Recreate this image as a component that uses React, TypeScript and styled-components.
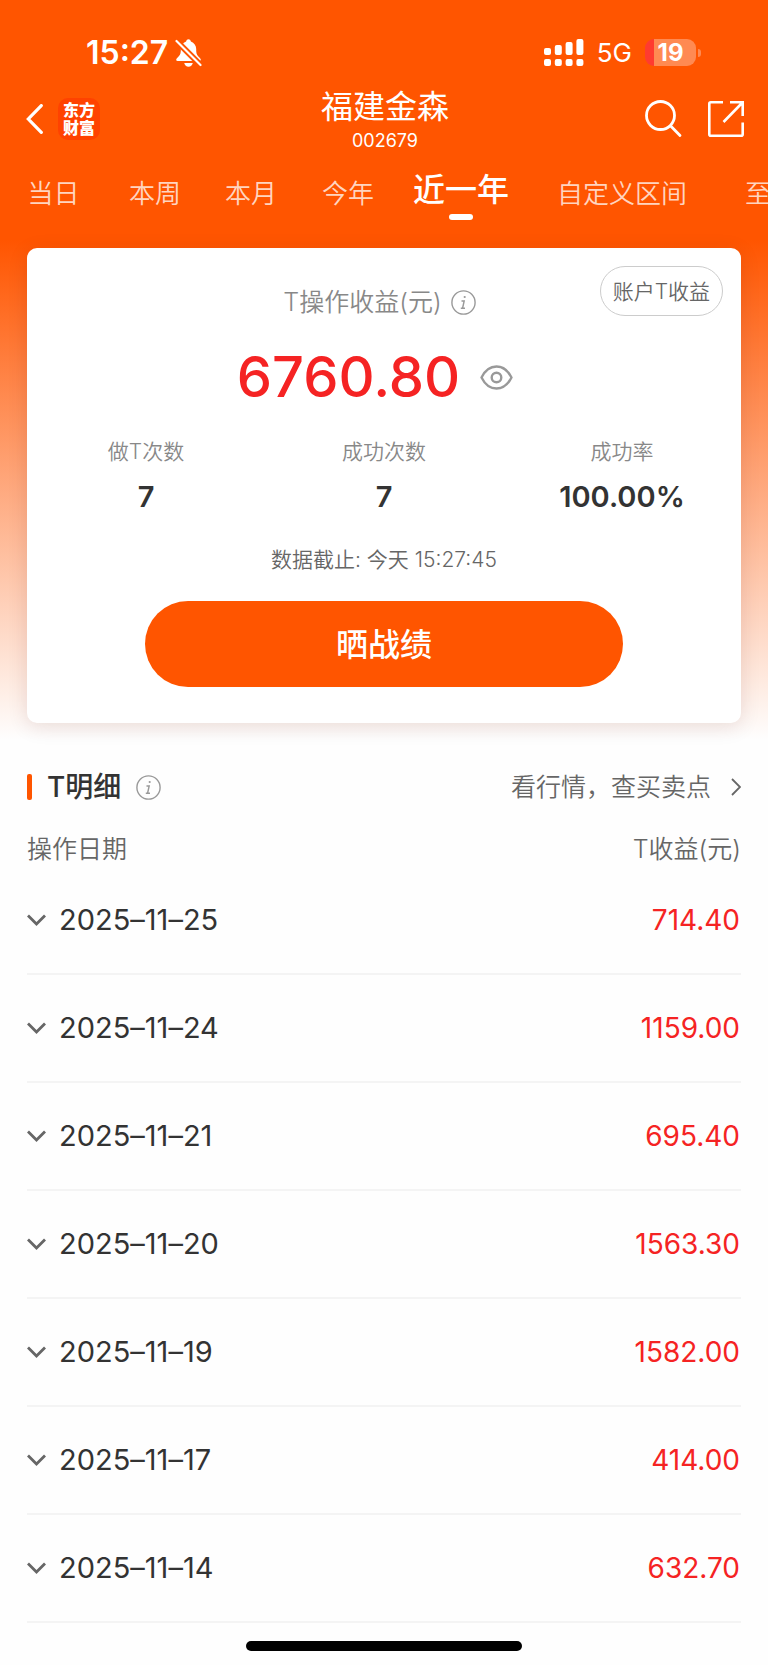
import React, { useState } from "react";
import styled, { createGlobalStyle } from "styled-components";

const GlobalStyle = createGlobalStyle`
  *, *::before, *::after { box-sizing: border-box; }
  body {
    margin: 0;
    background: #fefefe;
    color: #333;
    font-family: Inter, "Noto Sans CJK SC", sans-serif;
  }
  button { font: inherit; border: 0; padding: 0; background: none; color: inherit; cursor: pointer; }
  a { color: inherit; text-decoration: none; }
  h1, h2, p, dl, dd { margin: 0; font-weight: 400; }
  svg { display: block; flex: none; }
`;

const Page = styled.div`
  display: flex;
  flex-direction: column;
  min-height: 100vh;
  background: linear-gradient(#ff5500 240px, #fefefe 740px);
`;

const StatusBar = styled.div`
  display: flex;
  justify-content: space-between;
  align-items: center;
  height: 80px;
  padding: 25px 67px 0 86px;
  color: #fff;
`;

const StatusGroup = styled.div<{ $gap: number }>`
  display: flex;
  align-items: center;
  gap: ${(p) => p.$gap}px;
`;

const Clock = styled.span`
  font-size: 32px;
  font-weight: 600;
  line-height: 32px;
`;

const Network = styled.span`
  font-size: 26px;
  font-weight: 400;
  line-height: 32px;
`;

const Battery = styled.div`
  display: flex;
  align-items: center;
  gap: 2px;
`;

const BatteryBody = styled.div`
  width: 51px;
  height: 27px;
  border-radius: 9px;
  background: linear-gradient(90deg, #ff3b30 9px, #ff8a52 9px);
  font-size: 24px;
  font-weight: 700;
  line-height: 27px;
  text-align: center;
`;

const BatteryCap = styled.div`
  width: 3px;
  height: 8px;
  border-radius: 0 3px 3px 0;
  background: #ff8a52;
`;

const NavBar = styled.header`
  display: grid;
  grid-template-columns: 1fr auto 1fr;
  align-items: center;
  height: 78px;
  padding: 0 24px 0 26px;
  color: #fff;
`;

const NavSide = styled.div<{ $end?: boolean }>`
  display: flex;
  align-items: center;
  justify-content: ${(p) => (p.$end ? "flex-end" : "flex-start")};
  gap: ${(p) => (p.$end ? 26 : 15)}px;
`;

const Logo = styled.a`
  display: grid;
  place-content: center;
  width: 42px;
  height: 42px;
  border-radius: 10px;
  background: #ff4200;
  font-size: 16px;
  font-weight: 900;
  line-height: 18px;
  text-align: center;
`;

const TitleBlock = styled.div`
  padding-top: 3px;
  text-align: center;
`;

const Title = styled.h1`
  font-size: 32px;
  line-height: 40px;
`;

const StockCode = styled.p`
  font-size: 18px;
  line-height: 28px;
`;

const Tabs = styled.nav`
  display: grid;
  grid-template-columns: 107px 96px 96px 98px 128px 194px 104px;
  height: 90px;
  overflow: hidden;
`;

const Tab = styled.button<{ $active: boolean }>`
  display: flex;
  flex-direction: column;
  align-items: center;
  gap: 5px;
  padding-top: ${(p) => (p.$active ? 13 : 17)}px;
  color: ${(p) => (p.$active ? "#fff" : "#ffd5c0")};
  font-size: ${(p) => (p.$active ? 32 : 26)}px;
  font-weight: ${(p) => (p.$active ? 500 : 350)};
  line-height: 38px;
  white-space: nowrap;

  &::after {
    content: "";
    display: ${(p) => (p.$active ? "block" : "none")};
    width: 24px;
    height: 6px;
    border-radius: 3px;
    background: #fff;
  }
`;

const Card = styled.section`
  margin: 0 27px;
  padding: 18px 0 36px;
  border-radius: 10px;
  background: #fff;
  box-shadow: 0 4px 20px rgba(80, 20, 0, 0.12);
`;

const CardHead = styled.div`
  display: grid;
  grid-template-columns: 1fr auto 1fr;
  align-items: start;
  padding: 0 18px;
`;

const CardTitle = styled.h2`
  grid-column: 2;
  display: flex;
  align-items: center;
  gap: 9px;
  padding: 18px 9px 0 0;
  color: #888;
  font-size: 25px;
  font-weight: 350;
  line-height: 36px;
`;

const IconButton = styled.button`
  display: inline-flex;
  color: #999;
`;

const AccountButton = styled.button`
  justify-self: end;
  height: 50px;
  padding: 0 12px 2px;
  border: 1px solid #ccc;
  border-radius: 25px;
  color: #666;
  font-size: 21px;
  font-weight: 350;
  white-space: nowrap;
`;

const Profit = styled.div`
  display: flex;
  align-items: center;
  justify-content: center;
  gap: 20px;
  padding-right: 18px;
  margin-top: 22px;
`;

const ProfitValue = styled.strong`
  color: #f52323;
  font-size: 56px;
  font-weight: 500;
  line-height: 70px;
`;

const Stats = styled.dl`
  display: grid;
  grid-template-columns: repeat(3, 1fr);
  margin-top: 24px;
  text-align: center;
`;

const StatLabel = styled.dt`
  color: #888;
  font-size: 21px;
  font-weight: 350;
  line-height: 32px;
`;

const StatValue = styled.dd`
  margin-top: 9px;
  font-size: 29px;
  font-weight: 600;
  line-height: 40px;
`;

const Cutoff = styled.p`
  margin-top: 28px;
  color: #666;
  font-size: 21px;
  font-weight: 350;
  line-height: 30px;
  text-align: center;
`;

const ShareButton = styled.button`
  display: block;
  width: 67%;
  height: 86px;
  padding-bottom: 4px;
  margin: 26px auto 0;
  border-radius: 43px;
  background: #ff5500;
  color: #fff;
  font-size: 32px;
  font-weight: 500;
`;

const Details = styled.section`
  padding: 44px 27px 0;
`;

const DetailsHead = styled.div`
  display: flex;
  align-items: center;
  justify-content: space-between;
  height: 40px;
`;

const DetailsTitle = styled.div`
  display: flex;
  align-items: center;
  gap: 15px;

  &::before {
    content: "";
    width: 5px;
    height: 26px;
    border-radius: 2px;
    background: #ff5500;
  }

  h2 {
    font-size: 28px;
    font-weight: 500;
    line-height: 40px;
  }
`;

const QuoteLink = styled.a`
  display: flex;
  align-items: center;
  gap: 20px;
  color: #666;
  font-size: 25px;
  font-weight: 350;
  line-height: 40px;
`;

const Records = styled.table`
  width: 100%;
  margin-top: 25px;
  border-collapse: collapse;

  th {
    height: 34px;
    padding: 0;
    color: #666;
    font-size: 25px;
    font-weight: 350;
    line-height: 34px;
    text-align: left;
  }

  th:last-child,
  td:last-child {
    text-align: right;
  }

  td {
    height: 108px;
    padding: 0;
    border-bottom: 2px solid #f4f4f4;
    font-size: 29px;
    line-height: 40px;
  }
`;

const DateToggle = styled.button`
  display: flex;
  align-items: center;
  gap: 13px;
  font-feature-settings: "calt" 0;
`;

const Amount = styled.td`
  && {
    padding-right: 1px;
    color: #f52323;
    font-size: 28px;
  }
`;

const HomeIndicator = styled.div`
  width: 36%;
  height: 10px;
  margin: auto auto 14px;
  border-radius: 5px;
  background: #000;
`;

const BellOff = () => (
  <svg width="27" height="28" viewBox="0 0 27 28" fill="#fff" aria-label="静音">
    <path d="M13.500 0.300C12.300 0.300 11.500 1 11.100 2.500C7.800 3.700 5.900 6.500 5.800 10V12C5.700 15.500 4.500 16.700 1.900 19.200C0.700 20.300 1 22 2.600 22H24.400C26 22 26.300 20.300 25.100 19.200C22.500 16.700 21.300 15.500 21.200 12V10C21.100 6.500 19.200 3.700 15.900 2.500C15.500 1 14.700 0.300 13.500 0.300Z" />
    <path d="M9.200 24H17.800C17.200 26.300 15.700 27.700 13.500 27.700S9.800 26.300 9.200 24Z" />
    <path d="M0 0.500L26.500 27" stroke="#ff5500" strokeWidth="6" />
    <path d="M1.500 2L25.500 26" stroke="#fff" strokeWidth="2.200" strokeLinecap="round" />
  </svg>
);

const Signal = () => (
  <svg width="40" height="28" viewBox="0 0 40 28" fill="#fff" aria-label="信号">
    {[9, 6, 3, 0].map((top, i) => (
      <g key={top}>
        <rect x={i * 10.800} y={top} width="7" height={16 - top} rx="2" />
        <rect x={i * 10.800} y="20" width="7" height="7" rx="2" />
      </g>
    ))}
  </svg>
);

const InfoIcon = () => (
  <svg width="25" height="25" viewBox="0 0 25 25" fill="none" stroke="currentColor" strokeWidth="1.400">
    <circle cx="12.500" cy="12.500" r="11.600" />
    <circle cx="13.700" cy="7" r="1.100" fill="currentColor" stroke="none" />
    <path d="M10.500 11H13.200L11.600 18M9.800 18.300H14" />
  </svg>
);

const EyeIcon = () => (
  <svg width="33" height="25" viewBox="0 0 33 25" fill="none" stroke="currentColor" strokeWidth="2.400">
    <path d="M1.500 12.500C5 5.500 10 1.500 16.500 1.500S28 5.500 31.500 12.500C28 19.500 23 23.500 16.500 23.500S5 19.500 1.500 12.500Z" strokeLinejoin="round" />
    <circle cx="16.500" cy="12.500" r="4.800" />
  </svg>
);

const BackIcon = () => (
  <svg width="17" height="30" viewBox="0 0 17 30" fill="none" stroke="#fff" strokeWidth="3.200" strokeLinecap="round">
    <path d="M15.300 1.600L2.300 15L15.300 28.400" />
  </svg>
);

const SearchIcon = () => (
  <svg width="37" height="38" viewBox="0 0 37 38" fill="none" stroke="#fff" strokeWidth="2.800" strokeLinecap="round">
    <circle cx="15.500" cy="15.500" r="14" />
    <path d="M25.700 26L35 35.500" />
  </svg>
);

const ShareIcon = () => (
  <svg width="36" height="36" viewBox="0 0 36 36" fill="none" stroke="#fff" strokeWidth="2.600">
    <path d="M15 1.300H2.800Q1.300 1.300 1.300 2.800V33.200Q1.300 34.700 2.800 34.700H33.200Q34.700 34.700 34.700 33.200V21.500M22 1.300H34.700V15M34.500 1.500L15.500 21" />
  </svg>
);

const ArrowRight = () => (
  <svg width="10" height="18" viewBox="0 0 10 18" fill="none" stroke="#666" strokeWidth="1.800">
    <path d="M1 1L9 9L1 17" />
  </svg>
);

const ArrowDown = () => (
  <svg width="19" height="12" viewBox="0 0 19 12" fill="none" stroke="#666" strokeWidth="2.800">
    <path d="M1 1.500L9.500 10L18 1.500" />
  </svg>
);

const ranges = ["当日", "本周", "本月", "今年", "近一年", "自定义区间", "至今"];

const stats = [
  ["做T次数", "7"],
  ["成功次数", "7"],
  ["成功率", "100.00%"],
];

const records = [
  ["2025–11–25", "714.40"],
  ["2025–11–24", "1159.00"],
  ["2025–11–21", "695.40"],
  ["2025–11–20", "1563.30"],
  ["2025–11–19", "1582.00"],
  ["2025–11–17", "414.00"],
  ["2025–11–14", "632.70"],
];

export default function App() {
  const [range, setRange] = useState("近一年");

  return (
    <Page>
      <GlobalStyle />
      <StatusBar>
        <StatusGroup $gap={7}>
          <Clock>15:27</Clock>
          <BellOff />
        </StatusGroup>
        <StatusGroup $gap={13}>
          <Signal />
          <Network>5G</Network>
          <Battery>
            <BatteryBody>19</BatteryBody>
            <BatteryCap />
          </Battery>
        </StatusGroup>
      </StatusBar>

      <NavBar>
        <NavSide>
          <IconButton aria-label="返回"><BackIcon /></IconButton>
          <Logo href="#home">东方<br />财富</Logo>
        </NavSide>
        <TitleBlock>
          <Title>福建金森</Title>
          <StockCode>002679</StockCode>
        </TitleBlock>
        <NavSide $end>
          <IconButton aria-label="搜索"><SearchIcon /></IconButton>
          <IconButton aria-label="分享"><ShareIcon /></IconButton>
        </NavSide>
      </NavBar>

      <Tabs>
        {ranges.map((name) => (
          <Tab key={name} $active={name === range} onClick={() => setRange(name)}>
            {name}
          </Tab>
        ))}
      </Tabs>

      <Card>
        <CardHead>
          <CardTitle>
            T操作收益(元)
            <IconButton aria-label="收益说明"><InfoIcon /></IconButton>
          </CardTitle>
          <AccountButton>账户T收益</AccountButton>
        </CardHead>
        <Profit>
          <ProfitValue>6760.80</ProfitValue>
          <IconButton aria-label="隐藏金额"><EyeIcon /></IconButton>
        </Profit>
        <Stats>
          {stats.map(([label, value]) => (
            <div key={label}>
              <StatLabel>{label}</StatLabel>
              <StatValue>{value}</StatValue>
            </div>
          ))}
        </Stats>
        <Cutoff>数据截止: 今天 15:27:45</Cutoff>
        <ShareButton>晒战绩</ShareButton>
      </Card>

      <Details>
        <DetailsHead>
          <DetailsTitle>
            <h2>T明细</h2>
            <IconButton aria-label="明细说明"><InfoIcon /></IconButton>
          </DetailsTitle>
          <QuoteLink href="#quote">
            看行情，查买卖点
            <ArrowRight />
          </QuoteLink>
        </DetailsHead>
        <Records>
          <thead>
            <tr>
              <th scope="col">操作日期</th>
              <th scope="col">T收益(元)</th>
            </tr>
          </thead>
          <tbody>
            {records.map(([date, amount]) => (
              <tr key={date}>
                <td>
                  <DateToggle>
                    <ArrowDown />
                    {date}
                  </DateToggle>
                </td>
                <Amount>{amount}</Amount>
              </tr>
            ))}
          </tbody>
        </Records>
      </Details>

      <HomeIndicator />
    </Page>
  );
}
